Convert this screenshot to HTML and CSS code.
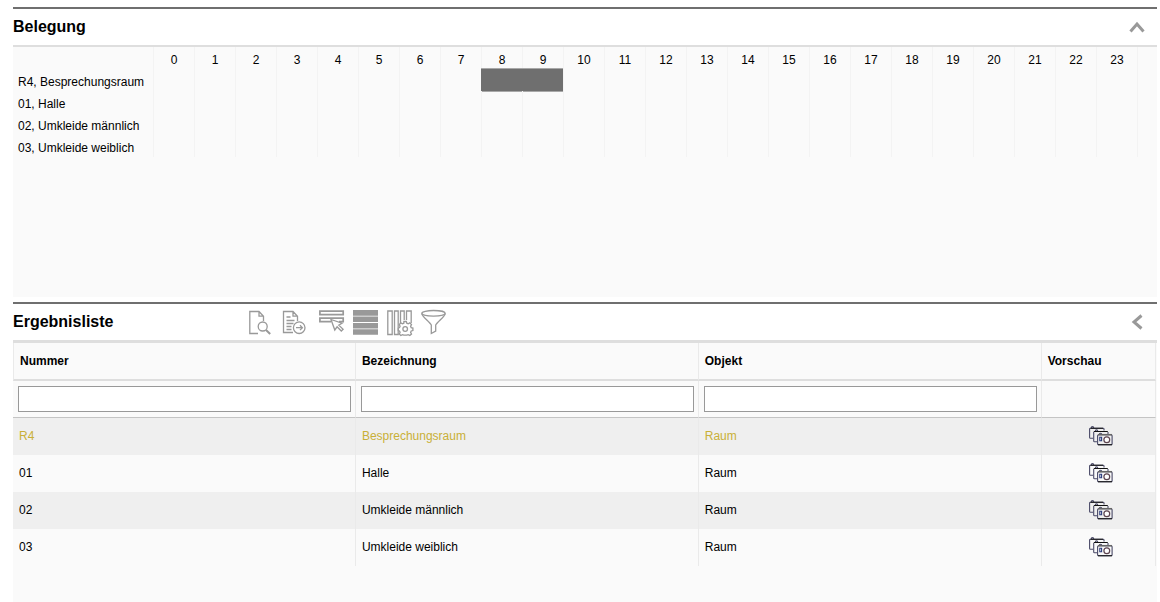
FILE: index.html
```html
<!DOCTYPE html>
<html lang="de">
<head>
<meta charset="utf-8">
<title>Belegung</title>
<link rel="stylesheet" href="styles.css">
</head>
<body>
<svg class="sprite" aria-hidden="true">
  <symbol id="cameras" viewBox="0 0 24 20">
    <g fill="none" stroke="#4a4a68" stroke-width="1.1">
      <path d="M4 12.300H1.500q-.9 0-.9-.9V3q0-.8.9-.8H14q1 0 1 .8v1.500M2.300 2Q2.300.6 3.500.6T4.800 2"/>
      <path d="M8 15.800H5.600q-.9 0-.9-.9V6M6.300 5.200q0-1.300 1.200-1.300t1.300 1.300M19 6v2"/>
      <rect x="8.600" y="8.700" width="14.500" height="10" rx="1"/>
      <path d="M10.300 8.500q0-1.300 1.200-1.300t1.300 1.300"/>
      <path d="M10.800 11.200h1.800v3.600h-1.800z" stroke="#2c3c7c"/>
    </g>
    <path d="M4.800 5.500h14M1.500 2.200H14M9 18.700h14" fill="none" stroke="#111" stroke-width="1.1"/>
    <path d="M9 8.700h14" stroke="#666" stroke-width="1.500"/>
    <circle cx="17.800" cy="13.800" r="2.900" fill="#fff" stroke="#5c4450" stroke-width="1.200"/>
  </symbol>
</svg>
<main class="page">
  <section class="panel">
    <header class="panel-head">
      <h2 class="panel-title">Belegung</h2>
      <button class="toggle" type="button" aria-label="Belegung einklappen">
        <svg width="16" height="16" viewBox="0 0 16 16"><path d="M1.500 12.500 8 5l6.500 7.500"/></svg>
      </button>
    </header>
    <div class="panel-body schedule-body">
      <table class="schedule">
        <colgroup><col class="col-room"><col span="24"><col class="col-end"></colgroup>
        <thead>
          <tr><td></td><th>0</th><th>1</th><th>2</th><th>3</th><th>4</th><th>5</th><th>6</th><th>7</th><th>8</th><th>9</th><th>10</th><th>11</th><th>12</th><th>13</th><th>14</th><th>15</th><th>16</th><th>17</th><th>18</th><th>19</th><th>20</th><th>21</th><th>22</th><th>23</th><td></td></tr>
        </thead>
        <tbody>
          <tr><th scope="row">R4, Besprechungsraum</th><td></td><td></td><td></td><td></td><td></td><td></td><td></td><td></td><td class="booked" colspan="2"></td><td></td><td></td><td></td><td></td><td></td><td></td><td></td><td></td><td></td><td></td><td></td><td></td><td></td><td></td><td></td></tr>
          <tr><th scope="row">01, Halle</th><td></td><td></td><td></td><td></td><td></td><td></td><td></td><td></td><td></td><td></td><td></td><td></td><td></td><td></td><td></td><td></td><td></td><td></td><td></td><td></td><td></td><td></td><td></td><td></td><td></td></tr>
          <tr><th scope="row">02, Umkleide männlich</th><td></td><td></td><td></td><td></td><td></td><td></td><td></td><td></td><td></td><td></td><td></td><td></td><td></td><td></td><td></td><td></td><td></td><td></td><td></td><td></td><td></td><td></td><td></td><td></td><td></td></tr>
          <tr><th scope="row">03, Umkleide weiblich</th><td></td><td></td><td></td><td></td><td></td><td></td><td></td><td></td><td></td><td></td><td></td><td></td><td></td><td></td><td></td><td></td><td></td><td></td><td></td><td></td><td></td><td></td><td></td><td></td><td></td></tr>
        </tbody>
      </table>
    </div>
  </section>

  <section class="panel panel-fill">
    <header class="panel-head results-head">
      <h2 class="panel-title">Ergebnisliste</h2>
      <div class="toolbar">
        <button type="button" aria-label="Vorschau">
          <svg viewBox="0 0 30 30"><path d="M10 26.500H1.800V4.500H11l4.500 4.700V14M11 4.500v4.700h4.500"/><circle cx="14.700" cy="19.500" r="4.500"/><path d="m18 23 4.200 4" stroke-width="2"/></svg>
        </button>
        <button type="button" aria-label="Exportieren">
          <svg viewBox="0 0 30 30"><path d="M11 25.500H1.500V4.500H11l4.500 4.700V14M11 4.500v4.700h4.500M4.500 10h4M4.500 13.500h8M4.500 16.500h7M4.500 19.500h5M4.500 22.500h5"/><circle cx="17.200" cy="20.700" r="5.800"/><path d="M14 20.700h6M18 18.300l2.400 2.400L18 23.100"/></svg>
        </button>
        <button type="button" aria-label="Zeile auswählen">
          <svg viewBox="0 0 30 30"><path stroke-width="1.700" d="M3.900 4.100h23.300v3.600H3.900zM15 14.700H3.900v-3.500h23.300v3.500H23"/><path d="m15 12.500 11 3.700-3.200 2 4.300 4-1.800 1.800-4.200-4.200-2.300 3.200z" fill="#fff"/></svg>
        </button>
        <button type="button" aria-label="Zeilenansicht">
          <svg viewBox="0 0 30 30"><path class="solid" d="M3 3h25v5.700H3zM3 9.500h25V15H3zM3 16h25v5.500H3zM3 22.300h25v5.400H3z"/></svg>
        </button>
        <button type="button" aria-label="Spalten konfigurieren">
          <svg viewBox="0 0 30 30"><path d="M3.800 4h4.400v23.500H3.800zM10.500 4h3.700v23.500h-3.700zM16.500 17V4h3.700v9M22.500 13V4h4.700v12"/><path fill="#fff" d="M19.900 14.500h2.400l.5 1.700 1.400.6 1.600-.9 1.700 1.700-.9 1.600.6 1.400 1.700.5v2.400l-1.700.5-.6 1.400.9 1.600-1.700 1.500-1.600-.9-1.400.6h-3l-1.400-.6-1.600.9-1.500-1.500.8-1.600-.6-1.400-1.200-.5v-2.400l1.200-.5.6-1.400-.8-1.600 1.500-1.700 1.600.9 1.400-.6z"/><circle cx="21.200" cy="22" r="2.300"/></svg>
        </button>
        <button type="button" aria-label="Filtern">
          <svg viewBox="0 0 30 30"><ellipse cx="15.500" cy="6.300" rx="11.700" ry="2.800"/><path d="M3.800 6.500c0 3 7.500 8 9.500 11.500v8.500l4.400-2.500v-6c2-3.500 9.500-8.500 9.500-11.500"/></svg>
        </button>
      </div>
      <button class="toggle" type="button" aria-label="Ergebnisliste einklappen">
        <svg width="16" height="16" viewBox="0 0 16 16"><path d="M12.500 1.500 5 8l7.500 6.500"/></svg>
      </button>
    </header>
    <div class="panel-body results-body">
      <table class="results">
        <colgroup><col class="col-data"><col class="col-data"><col class="col-data"><col></colgroup>
        <thead>
          <tr class="titles"><th>Nummer</th><th>Bezeichnung</th><th>Objekt</th><th>Vorschau</th></tr>
          <tr class="filters">
            <td><input type="text" aria-label="Nummer filtern"></td>
            <td><input type="text" aria-label="Bezeichnung filtern"></td>
            <td><input type="text" aria-label="Objekt filtern"></td>
            <td></td>
          </tr>
        </thead>
        <tbody>
          <tr class="selected"><td>R4</td><td>Besprechungsraum</td><td>Raum</td><td class="preview"><button type="button" aria-label="Bilder zu R4"><svg><use href="#cameras"/></svg></button></td></tr>
          <tr><td>01</td><td>Halle</td><td>Raum</td><td class="preview"><button type="button" aria-label="Bilder zu 01"><svg><use href="#cameras"/></svg></button></td></tr>
          <tr><td>02</td><td>Umkleide männlich</td><td>Raum</td><td class="preview"><button type="button" aria-label="Bilder zu 02"><svg><use href="#cameras"/></svg></button></td></tr>
          <tr><td>03</td><td>Umkleide weiblich</td><td>Raum</td><td class="preview"><button type="button" aria-label="Bilder zu 03"><svg><use href="#cameras"/></svg></button></td></tr>
        </tbody>
      </table>
    </div>
  </section>
</main>
</body>
</html>
```
FILE: styles.css
```css
* { box-sizing: border-box; }

body {
  margin: 0;
  background: #fff;
  color: #000;
  font: 12px/16px "Liberation Sans", Arial, sans-serif;
}

button {
  display: block;
  padding: 0;
  border: 0;
  background: none;
  cursor: pointer;
}

svg { display: block; }
.sprite { position: absolute; width: 0; height: 0; }

.page {
  display: flex;
  flex-direction: column;
  gap: 5px;
  min-height: 100vh;
  padding: 7px 3px 0 13px;
}

.panel {
  display: flex;
  flex-direction: column;
  border-top: 2px solid #6f6f6f;
}
.panel-fill { flex: 1; }

.panel-head {
  display: flex;
  align-items: center;
  height: 38px;
  padding-right: 12px;
  border-bottom: 2px solid #dedede;
}
.results-head { height: 39px; border-bottom-width: 3px; }

.panel-title {
  width: 235px;
  margin: 0;
  font-size: 16px;
  line-height: 20px;
}

.toggle { margin-left: auto; }
.toggle path { fill: none; stroke: #999; stroke-width: 3; }

.toolbar { display: flex; gap: 4px; }
.toolbar svg {
  width: 30px;
  height: 30px;
  fill: none;
  stroke: #999;
  stroke-width: 1.3;
}
.toolbar .solid { fill: #999; stroke: none; }

.panel-body { flex: 1; background: #fafafa; }
.schedule-body { min-height: 250px; }
.results-body { padding-right: 1px; }

table {
  width: 100%;
  table-layout: fixed;
  border-collapse: separate;
  border-spacing: 0;
}

.col-room { width: 140px; }
.col-end { width: 20px; }
.schedule th, .schedule td {
  height: 22px;
  padding: 5px 0 1px;
  font-weight: normal;
  border-left: 1px solid #f3f3f3;
}
.schedule tr > :first-child { border-left: 0; }
.schedule tbody th { padding-left: 5px; text-align: left; white-space: nowrap; }
.schedule .booked {
  background: #6f6f6f;
  border-color: #6f6f6f;
  box-shadow: 0 -1px #a8a8a8, 0 1px #a8a8a8, 1px 0 #6f6f6f;
}

.col-data { width: 30%; }
.results th, .results td { border-right: 1px solid #eaeaea; text-align: left; }
.titles th { height: 38px; padding: 0 6px; border-bottom: 2px solid #dedede; }
.titles th:first-child { border-left: 1px solid #eaeaea; }
.filters td { height: 37px; padding: 0 4px 0 5px; border-bottom: 1px solid #c4c4c4; }
.filters input {
  display: block;
  width: 100%;
  height: 26px;
  padding: 0 5px;
  border: 1px solid #999;
  background: #fff;
  font: inherit;
}
.results tbody td { height: 37px; padding: 0 6px 2px; }
.results tbody tr:nth-child(odd) { background: #efefef; }
.results .selected { color: #c9b037; }
.preview button { margin: 0 auto; padding-left: 6px; }
.preview svg { width: 24px; height: 20px; }
```
